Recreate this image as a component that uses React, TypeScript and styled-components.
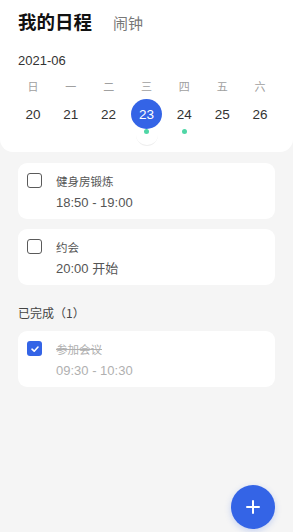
import React from "react";
import styled, { createGlobalStyle } from "styled-components";

const GlobalStyle = createGlobalStyle`
  html, body { margin: 0; padding: 0; }
  body {
    background: #f5f5f5;
    font-family: "Noto Sans CJK SC", "Noto Sans", "Liberation Sans", sans-serif;
    -webkit-font-smoothing: antialiased;
  }
  * { box-sizing: border-box; }
`;

const Page = styled.div`
  width: 293px;
  height: 532px;
  background: #f5f5f5;
  position: relative;
  overflow: hidden;
`;

const Header = styled.div`
  background: #ffffff;
  border-radius: 0 0 13px 13px;
  padding: 7px 14px 0;
  height: 152px;
  position: relative;
`;

const TitleRow = styled.div`
  display: flex;
  align-items: baseline;
  gap: 21px;
  padding-left: 4px;
  height: 28px;
`;

const Title = styled.div`
  font-size: 18.5px;
  font-weight: 700;
  color: #111;
  line-height: 28px;
`;

const Tab = styled.div`
  font-size: 15px;
  color: #777;
  line-height: 28px;
`;

const Month = styled.div`
  margin-top: 18px;
  padding-left: 4px;
  font-family: "Liberation Sans", "Noto Sans", sans-serif;
  font-size: 13px;
  color: #333;
  line-height: 16px;
`;

const Grid = styled.div`
  display: grid;
  grid-template-columns: repeat(7, 1fr);
`;

const WeekRow = styled(Grid)`
  margin-top: 8px;
  height: 18px;
  align-items: center;
`;

const WeekDay = styled.div`
  text-align: center;
  font-size: 11px;
  color: #a0a0a0;
  line-height: 18px;
`;

const DateRow = styled(Grid)`
  margin-top: 4px;
`;

const DateCell = styled.div`
  display: flex;
  flex-direction: column;
  align-items: center;
`;

const DateNum = styled.div<{ $active?: boolean }>`
  width: 31px;
  height: 30px;
  border-radius: 50%;
  display: flex;
  align-items: center;
  justify-content: center;
  font-family: "Liberation Sans", "Noto Sans", sans-serif;
  font-size: 13.5px;
  font-weight: 500;
  color: ${(p) => (p.$active ? "#fff" : "#333")};
  background: ${(p) => (p.$active ? "#3464e6" : "transparent")};
`;

const Dot = styled.div<{ $show?: boolean }>`
  width: 5px;
  height: 5px;
  border-radius: 50%;
  background: ${(p) => (p.$show ? "#4fd6a6" : "transparent")};
`;

const Handle = styled.div`
  position: absolute;
  left: 136px;
  top: 133px;
  width: 22px;
  height: 13px;
  border-radius: 0 0 11px 11px;
  border-bottom: 1px solid #efefef;
`;

const List = styled.div`
  padding: 11px 18px 0;
  display: flex;
  flex-direction: column;
  gap: 10px;
`;

const Card = styled.div`
  background: #fff;
  border-radius: 9px;
  height: 56px;
  padding: 10px 9px 0;
  display: flex;
  gap: 14px;
`;

const Box = styled.div<{ $checked?: boolean }>`
  width: 15px;
  height: 15px;
  flex: none;
  border-radius: 3px;
  border: ${(p) => (p.$checked ? "none" : "1.5px solid #5a5a5a")};
  background: ${(p) => (p.$checked ? "#3464e6" : "transparent")};
  display: flex;
  align-items: center;
  justify-content: center;
`;

const Texts = styled.div`
  display: flex;
  flex-direction: column;
`;

const ItemTitle = styled.div<{ $done?: boolean }>`
  font-size: 11.5px;
  line-height: 16px;
  color: ${(p) => (p.$done ? "#b0b0b0" : "#555")};
  text-decoration: ${(p) => (p.$done ? "line-through" : "none")};
`;

const ItemTime = styled.div<{ $done?: boolean }>`
  margin-top: 6px;
  font-family: "Liberation Sans", "Noto Sans CJK SC", sans-serif;
  font-size: 13px;
  line-height: 16px;
  color: ${(p) => (p.$done ? "#b0b0b0" : "#555")};
`;

const Section = styled.div`
  margin-top: 19px;
  padding: 0 18px;
  font-size: 12px;
  color: #444;
  line-height: 18px;
`;

const DoneList = styled(List)`
  padding-top: 9px;
`;

const Fab = styled.button`
  position: absolute;
  left: 231px;
  top: 485px;
  width: 44px;
  height: 44px;
  border-radius: 50%;
  border: none;
  background: #3464e6;
  box-shadow: 0 2px 6px rgba(52, 100, 230, 0.25);
  display: flex;
  align-items: center;
  justify-content: center;
  padding: 0;
`;

const week = ["日", "一", "二", "三", "四", "五", "六"];
const dates = [
  { n: 20 },
  { n: 21 },
  { n: 22 },
  { n: 23, active: true, dot: true },
  { n: 24, dot: true },
  { n: 25 },
  { n: 26 },
];

export default function App() {
  return (
    <Page>
      <GlobalStyle />
      <Header>
        <TitleRow>
          <Title>我的日程</Title>
          <Tab>闹钟</Tab>
        </TitleRow>
        <Month>2021-06</Month>
        <WeekRow>
          {week.map((w) => (
            <WeekDay key={w}>{w}</WeekDay>
          ))}
        </WeekRow>
        <DateRow>
          {dates.map((d) => (
            <DateCell key={d.n}>
              <DateNum $active={d.active}>{d.n}</DateNum>
              <Dot $show={d.dot} />
            </DateCell>
          ))}
        </DateRow>
        <Handle />
      </Header>
      <List>
        <Card>
          <Box />
          <Texts>
            <ItemTitle>健身房锻炼</ItemTitle>
            <ItemTime>18:50 - 19:00</ItemTime>
          </Texts>
        </Card>
        <Card>
          <Box />
          <Texts>
            <ItemTitle>约会</ItemTitle>
            <ItemTime>20:00 开始</ItemTime>
          </Texts>
        </Card>
      </List>
      <Section>已完成（1）</Section>
      <DoneList>
        <Card>
          <Box $checked>
            <svg width="10" height="10" viewBox="0 0 10 10">
              <path d="M2 5.2 L4.2 7.2 L8 3" fill="none" stroke="#fff" strokeWidth="1.6" strokeLinecap="round" strokeLinejoin="round" />
            </svg>
          </Box>
          <Texts>
            <ItemTitle $done>参加会议</ItemTitle>
            <ItemTime $done>09:30 - 10:30</ItemTime>
          </Texts>
        </Card>
      </DoneList>
      <Fab aria-label="add">
        <svg width="14" height="14" viewBox="0 0 14 14">
          <path d="M7 1 V13 M1 7 H13" stroke="#fff" strokeWidth="2" strokeLinecap="round" />
        </svg>
      </Fab>
    </Page>
  );
}
